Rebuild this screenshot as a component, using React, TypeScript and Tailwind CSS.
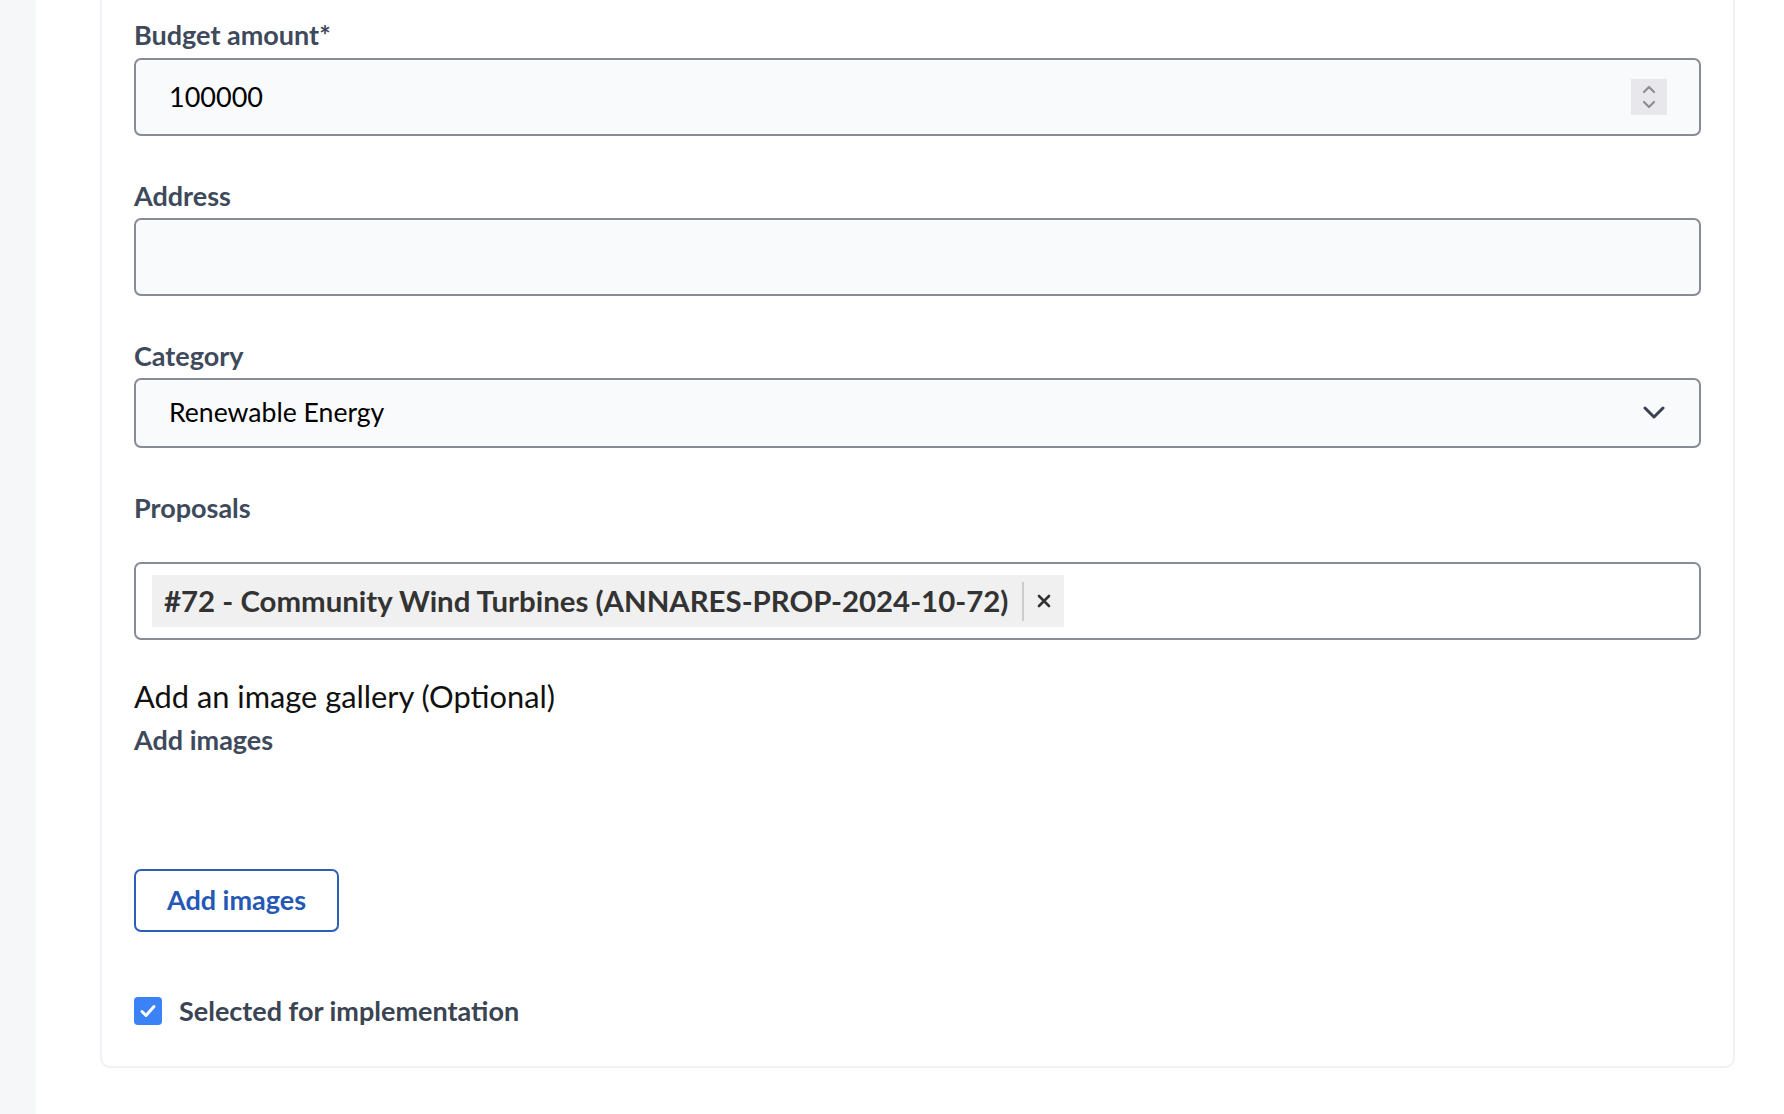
import React from "react";

const font = { fontFamily: "Lato, 'Noto Sans', sans-serif" };

function Label({ children, className = "" }: { children: React.ReactNode; className?: string }) {
  return (
    <div className={"h-[30px] leading-[30px] text-[27px] font-bold text-[#3e4a5b] " + className}>{children}</div>
  );
}

export default function App() {
  return (
    <div className="flex min-h-[1114px] w-full bg-white" style={font}>
      <div className="w-[36px] shrink-0 bg-[#f6f7f9]" />
      <div className="pl-[64px]">
        <div className="w-[1635px] rounded-b-[10px] border-x-2 border-b-2 border-[#f0f0f5] pl-[32px] pr-[32px] pt-[20px] pb-[40px]">
          <Label>Budget amount*</Label>
          <div className="mt-[8px] flex h-[78px] items-center rounded-[7px] border-2 border-[#878c96] bg-[#f9fafb] pl-[33px] pr-[32px]">
            <span className="flex-1 text-[27px] text-black">100000</span>
            <div className="flex h-[36px] w-[36px] flex-col items-center justify-center bg-[#e8e8ec]">
              <svg width="16" height="26" viewBox="0 0 16 26" fill="none" stroke="#8c8c96" strokeWidth="2.2" strokeLinecap="round" strokeLinejoin="round">
                <path d="M3 8 L8 3 L13 8" />
                <path d="M3 18 L8 23 L13 18" />
              </svg>
            </div>
          </div>

          <Label className="mt-[45px]">Address</Label>
          <div className="mt-[7px] h-[78px] rounded-[7px] border-2 border-[#878c96] bg-[#f9fafb]" />

          <Label className="mt-[45px]">Category</Label>
          <div className="mt-[7px] flex h-[70px] items-center rounded-[7px] border-2 border-[#878c96] bg-[#f9fafb] pl-[33px] pr-[34px]">
            <span className="flex-1 text-[26.6px] text-black">Renewable Energy</span>
            <svg width="22" height="14" viewBox="0 0 22 14" fill="none" stroke="#374151" strokeWidth="3" strokeLinecap="round" strokeLinejoin="round">
              <path d="M2 2 L11 11 L20 2" />
            </svg>
          </div>

          <Label className="mt-[45px]">Proposals</Label>
          <div className="mt-[39px] flex h-[78px] items-center rounded-[7px] border-2 border-[#878c96] bg-white pl-[16px]">
            <div className="flex h-[52px] items-center bg-[#f0f0f0] pl-[12px] pr-[13px]">
              <span className="text-[29.4px] font-bold text-[#333333]">#72 - Community Wind Turbines (ANNARES-PROP-2024-10-72)</span>
              <div className="ml-[14px] h-[39px] w-[2px] bg-[#cccccc]" />
              <svg className="ml-[13px]" width="14" height="14" viewBox="0 0 14 14" fill="none" stroke="#333333" strokeWidth="2.6" strokeLinecap="round">
                <path d="M2 2 L12 12 M12 2 L2 12" />
              </svg>
            </div>
          </div>

          <div className="mt-[39px] h-[36px] leading-[36px] text-[30.8px] text-[#111111]">Add an image gallery (Optional)</div>
          <Label className="mt-[10px]">Add images</Label>

          <button className="mt-[114px] flex h-[63px] w-[205px] items-center justify-center rounded-[7px] border-2 border-[#2b5fb8] bg-white text-[27px] font-bold text-[#2558b5]" style={font}>
            Add images
          </button>

          <div className="mt-[64px] flex h-[30px] items-center">
            <div className="flex h-[28px] w-[28px] items-center justify-center rounded-[4px] bg-[#3b82f6]">
              <svg width="18" height="18" viewBox="0 0 18 18" fill="none" stroke="white" strokeWidth="3" strokeLinecap="round" strokeLinejoin="round">
                <path d="M3 9.5 L7 13.5 L15 4.5" />
              </svg>
            </div>
            <span className="ml-[17px] text-[27px] font-bold text-[#3a4452]">Selected for implementation</span>
          </div>
        </div>
      </div>
    </div>
  );
}
